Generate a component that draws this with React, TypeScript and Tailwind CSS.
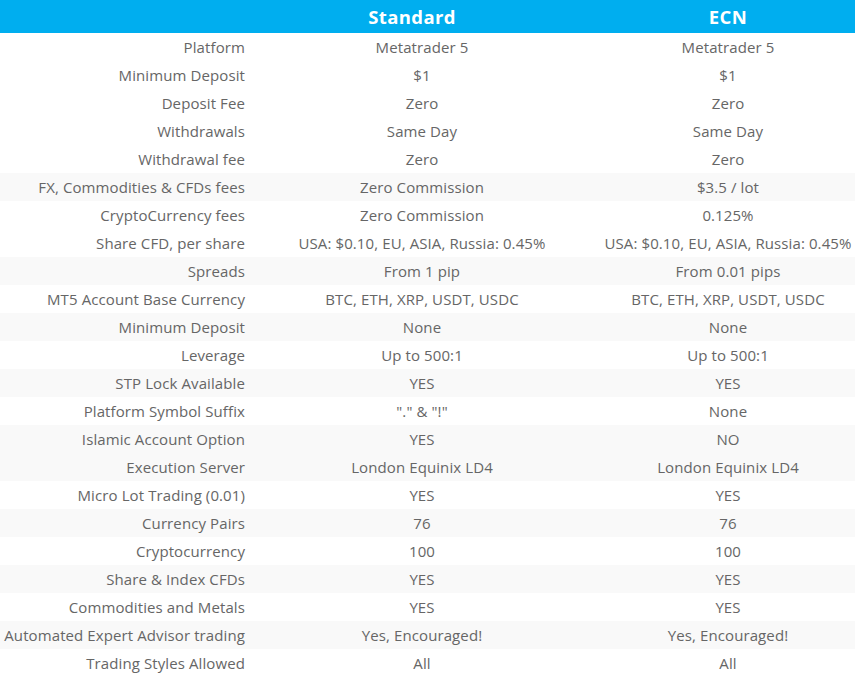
const rows: [string, string, string][] = [
  ['Platform', 'Metatrader 5', 'Metatrader 5'],
  ['Minimum Deposit', '$1', '$1'],
  ['Deposit Fee', 'Zero', 'Zero'],
  ['Withdrawals', 'Same Day', 'Same Day'],
  ['Withdrawal fee', 'Zero', 'Zero'],
  ['FX, Commodities & CFDs fees', 'Zero Commission', '$3.5 / lot'],
  ['CryptoCurrency fees', 'Zero Commission', '0.125%'],
  ['Share CFD, per share', 'USA: $0.10, EU, ASIA, Russia: 0.45%', 'USA: $0.10, EU, ASIA, Russia: 0.45%'],
  ['Spreads', 'From 1 pip', 'From 0.01 pips'],
  ['MT5 Account Base Currency', 'BTC, ETH, XRP, USDT, USDC', 'BTC, ETH, XRP, USDT, USDC'],
  ['Minimum Deposit', 'None', 'None'],
  ['Leverage', 'Up to 500:1', 'Up to 500:1'],
  ['STP Lock Available', 'YES', 'YES'],
  ['Platform Symbol Suffix', '"." & "!"', 'None'],
  ['Islamic Account Option', 'YES', 'NO'],
  ['Execution Server', 'London Equinix LD4', 'London Equinix LD4'],
  ['Micro Lot Trading (0.01)', 'YES', 'YES'],
  ['Currency Pairs', '76', '76'],
  ['Cryptocurrency', '100', '100'],
  ['Share & Index CFDs', 'YES', 'YES'],
  ['Commodities and Metals', 'YES', 'YES'],
  ['Automated Expert Advisor trading', 'Yes, Encouraged!', 'Yes, Encouraged!'],
  ['Trading Styles Allowed', 'All', 'All'],
];

// shaded rows don't follow a strict odd/even pattern in the source table
const shaded = new Set([5, 8, 10, 12, 14, 15, 17, 19, 21]);

export default function App() {
  return (
    <div className="w-[855px] min-h-screen bg-white font-['Open_Sans',sans-serif] text-[15px] tracking-[0.1px] text-[#666]">
      <div className="grid h-[33px] grid-cols-[250px_344px_1fr] items-center bg-[#00aeef] text-[18.5px] font-bold tracking-[0.4px] text-white">
        <div />
        <div className="pr-[20px] text-center">Standard</div>
        <div className="pl-[7px] text-center">ECN</div>
      </div>
      {rows.map(([label, standard, ecn], i) => (
        <div
          key={i}
          className={`grid h-[28px] grid-cols-[250px_344px_1fr] items-center ${shaded.has(i) ? 'bg-[#f9f9f9]' : 'bg-white'}`}
        >
          <div className="whitespace-nowrap pr-[5px] text-right">{label}</div>
          <div className="whitespace-nowrap text-center">{standard}</div>
          <div className="whitespace-nowrap pl-[7px] text-center">{ecn}</div>
        </div>
      ))}
    </div>
  );
}
